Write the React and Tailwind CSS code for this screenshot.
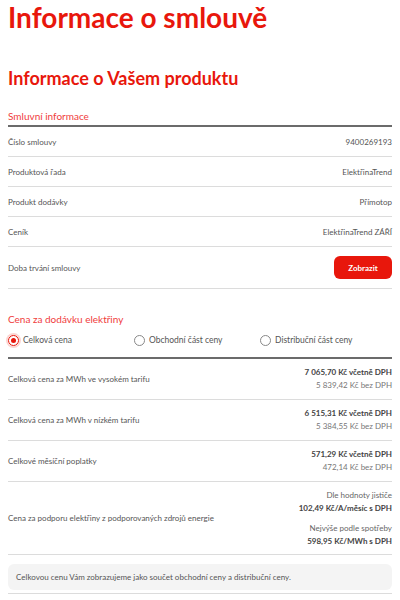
import React from "react";

const Row = ({ label, value }) => (
  <div className="flex h-[30px] items-center justify-between border-b border-[#dcdcdc] text-[8px] text-[#555]">
    <span>{label}</span>
    <span>{value}</span>
  </div>
);

const PriceRow = ({ label, v1, v2, h }) => (
  <div className={`flex ${h} items-center justify-between border-b border-[#dcdcdc] text-[8px]`}>
    <span className="text-[#555]">{label}</span>
    <div className="flex flex-col items-end leading-[13px]">
      <span className="font-bold text-[#444]">{v1}</span>
      <span className="text-[#777]">{v2}</span>
    </div>
  </div>
);

const Radio = ({ checked, label, w }) => (
  <div className={`flex items-center gap-[4px] ${w}`}>
    {checked ? (
      <span className="flex h-[11px] w-[11px] items-center justify-center rounded-full border border-[#e8170c] shadow-[0_0_0_2px_#fbd5d2]">
        <span className="h-[5px] w-[5px] rounded-full bg-[#e8170c]" />
      </span>
    ) : (
      <span className="h-[11px] w-[11px] rounded-full border border-[#888]" />
    )}
    <span className="text-[8.5px] text-[#555]">{label}</span>
  </div>
);

export default function App() {
  return (
    <div className="w-[400px] bg-white px-2" style={{ fontFamily: "Lato, 'Noto Sans', sans-serif" }}>
      <h1 className="h-[34px] text-[28px] font-bold leading-[34px] text-[#e8170c]">Informace o smlouvě</h1>
      <h2 className="mt-[33px] h-[22px] text-[18px] font-bold leading-[22px] text-[#e8170c]">Informace o Vašem produktu</h2>
      <div className="mt-[18px] flex h-[18px] items-center text-[10px] text-[#f03c3c]">Smluvní informace</div>
      <div className="h-[2px] bg-[#6b6b6b]" />
      <Row label="Číslo smlouvy" value="9400269193" />
      <Row label="Produktová řada" value="ElektřinaTrend" />
      <Row label="Produkt dodávky" value="Přímotop" />
      <Row label="Ceník" value="ElektřinaTrend ZÁŘÍ" />
      <div className="flex h-[42px] items-center justify-between border-b border-[#dcdcdc] text-[8px] text-[#555]">
        <span>Doba trvání smlouvy</span>
        <button className="h-[23px] w-[58px] rounded-md bg-[#e8170c] text-[8px] font-bold text-white">Zobrazit</button>
      </div>
      <div className="mt-[21px] flex h-[18px] items-center text-[10px] text-[#f03c3c]">Cena za dodávku elektřiny</div>
      <div className="mt-[2px] flex h-[20px] items-center">
        <Radio checked label="Celková cena" w="w-[126px]" />
        <Radio label="Obchodní část ceny" w="w-[126px]" />
        <Radio label="Distribuční část ceny" />
      </div>
      <div className="mt-[7px] h-[2px] bg-[#6b6b6b]" />
      <PriceRow h="h-[41px]" label="Celková cena za MWh ve vysokém tarifu" v1="7 065,70 Kč včetně DPH" v2="5 839,42 Kč bez DPH" />
      <PriceRow h="h-[41px]" label="Celková cena za MWh v nízkém tarifu" v1="6 515,31 Kč včetně DPH" v2="5 384,55 Kč bez DPH" />
      <PriceRow h="h-[41px]" label="Celkové měsíční poplatky" v1="571,29 Kč včetně DPH" v2="472,14 Kč bez DPH" />
      <div className="flex h-[73px] items-center justify-between border-b border-[#dcdcdc] text-[8px]">
        <span className="text-[#555]">Cena za podporu elektřiny z podporovaných zdrojů energie</span>
        <div className="flex flex-col items-end leading-[13px]">
          <span className="text-[#666]">Dle hodnoty jističe</span>
          <span className="font-bold text-[#444]">102,49 Kč/A/měsíc s DPH</span>
          <span className="mt-[7px] text-[#666]">Nejvýše podle spotřeby</span>
          <span className="font-bold text-[#444]">598,95 Kč/MWh s DPH</span>
        </div>
      </div>
      <div className="mt-[9px] flex h-[26px] items-center rounded-md bg-[#f4f4f4] px-2 text-[8px] text-[#555]">
        Celkovou cenu Vám zobrazujeme jako součet obchodní ceny a distribuční ceny.
      </div>
      <div className="mt-[3px] h-px bg-[#dcdcdc]" />
    </div>
  );
}
